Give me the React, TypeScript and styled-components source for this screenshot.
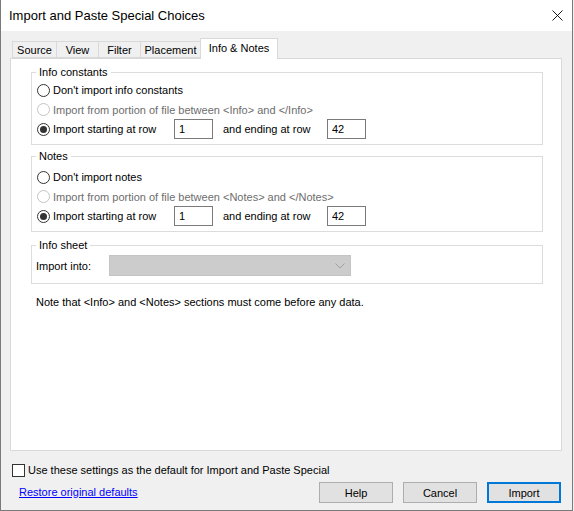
import styled, { createGlobalStyle } from 'styled-components';

const GlobalStyle = createGlobalStyle`
  html, body {
    margin: 0;
    background: #f0f0f0;
  }
  body {
    font-family: 'Liberation Sans', Arial, sans-serif;
    font-size: 11px;
    color: #000;
  }
`;

const Window = styled.div`
  width: 573px;
  height: 511px;
  box-sizing: border-box;
  border: 1px solid #7a7a7a;
  border-top: none;
  background: #f0f0f0;
  display: flex;
  flex-direction: column;
`;

const TitleBar = styled.div`
  height: 31px;
  flex: none;
  background: #fff;
  display: flex;
  align-items: center;
  justify-content: space-between;
  padding: 0 9px 0 8px;
  font-size: 13px;
`;

const Body = styled.div`
  padding: 7px 10px 0 9px;
`;

const TabStrip = styled.div`
  height: 20px;
  display: flex;
  align-items: flex-end;
  padding-left: 2px;
  position: relative;
  z-index: 1;
`;

const Tab = styled.div<{ $w: number; $active?: boolean }>`
  box-sizing: border-box;
  width: ${(p) => p.$w}px;
  height: ${(p) => (p.$active ? 21 : 17)}px;
  margin-left: -1px;
  margin-bottom: ${(p) => (p.$active ? -1 : 0)}px;
  padding-bottom: ${(p) => (p.$active ? 2 : 0)}px;
  border: 1px solid #d9d9d9;
  border-bottom: ${(p) => (p.$active ? 'none' : '1px solid #d9d9d9')};
  background: ${(p) => (p.$active ? '#fff' : '#f0f0f0')};
  display: flex;
  align-items: center;
  justify-content: center;
  &:first-child {
    margin-left: 0;
  }
`;

const Panel = styled.div`
  box-sizing: border-box;
  height: 393px;
  border: 1px solid #d9d9d9;
  background: #fff;
  padding: 5px 18px 0 20px;
`;

const Group = styled.fieldset<{ $mt: number; $pt: number; $pb: number }>`
  margin: ${(p) => p.$mt}px 0 0 0;
  padding: ${(p) => p.$pt}px 4px ${(p) => p.$pb}px 4px;
  border: 1px solid #dcdcdc;
  min-width: 0;
`;

const Legend = styled.legend`
  padding: 0 3px;
  line-height: 16px;
`;

const Row = styled.div<{ $h: number }>`
  height: ${(p) => p.$h}px;
  display: flex;
  align-items: center;
`;

const Option = styled.label<{ $w?: number; $disabled?: boolean }>`
  display: flex;
  align-items: center;
  gap: 3px;
  margin-left: 1px;
  width: ${(p) => (p.$w ? `${p.$w}px` : 'auto')};
  color: ${(p) => (p.$disabled ? '#6d6d6d' : '#000')};
`;

const RadioDot = styled.span<{ $checked?: boolean; $disabled?: boolean }>`
  box-sizing: border-box;
  width: 13px;
  height: 13px;
  border-radius: 50%;
  border: 1px solid ${(p) => (p.$disabled ? '#c4c4c4' : '#333')};
  background: #fff;
  display: flex;
  align-items: center;
  justify-content: center;
  &::after {
    content: '';
    display: ${(p) => (p.$checked ? 'block' : 'none')};
    width: 7px;
    height: 7px;
    border-radius: 50%;
    background: #333;
  }
`;

const NumBox = styled.div<{ $w: number }>`
  box-sizing: border-box;
  width: ${(p) => p.$w}px;
  height: 20px;
  border: 1px solid #7a7a7a;
  background: #fff;
  padding-left: 4px;
  display: flex;
  align-items: center;
`;

const Caption = styled.span<{ $w: number; $ml: number }>`
  width: ${(p) => p.$w}px;
  margin-left: ${(p) => p.$ml}px;
`;

const SelectLabel = styled.span`
  width: 73px;
`;

const Select = styled.div`
  box-sizing: border-box;
  width: 242px;
  height: 21px;
  background: #cccccc;
  border: 1px solid #c4c4c4;
  display: flex;
  align-items: center;
  justify-content: flex-end;
  padding-right: 5px;
`;

const NoteText = styled.div`
  margin: 10px 0 0 5px;
  line-height: 16px;
`;

const Footer = styled.div`
  padding: 11px 11px 0 11px;
`;

const CheckRow = styled.label`
  height: 16px;
  display: flex;
  align-items: center;
  gap: 3px;
`;

const CheckBox = styled.span`
  box-sizing: border-box;
  width: 13px;
  height: 13px;
  border: 1px solid #333;
  background: #fff;
`;

const ActionRow = styled.div`
  margin-top: 4px;
  height: 21px;
  display: flex;
  align-items: center;
`;

const Link = styled.a`
  color: #0000ff;
  text-decoration: underline;
  margin-left: 7px;
  margin-top: -2px;
  margin-right: auto;
  cursor: pointer;
`;

const Button = styled.button<{ $primary?: boolean }>`
  box-sizing: border-box;
  width: 74px;
  height: 21px;
  margin-left: 10px;
  padding: 0;
  font: inherit;
  color: #000;
  background: #e1e1e1;
  border: ${(p) => (p.$primary ? '2px solid #0078d7' : '1px solid #adadad')};
`;

function Radio({
  label,
  checked,
  disabled,
  width,
}: {
  label: string;
  checked?: boolean;
  disabled?: boolean;
  width?: number;
}) {
  return (
    <Option $w={width} $disabled={disabled}>
      <RadioDot $checked={checked} $disabled={disabled} />
      <span>{label}</span>
    </Option>
  );
}

function RangeRow({ from, to }: { from: string; to: string }) {
  return (
    <Row $h={20}>
      <Radio label="Import starting at row" checked width={137} />
      <NumBox $w={39}>{from}</NumBox>
      <Caption $w={104} $ml={10}>
        and ending at row
      </Caption>
      <NumBox $w={39}>{to}</NumBox>
    </Row>
  );
}

const tabs = [
  { label: 'Source', w: 45 },
  { label: 'View', w: 43 },
  { label: 'Filter', w: 43 },
  { label: 'Placement', w: 61 },
  { label: 'Info & Notes', w: 78, active: true },
];

export default function App() {
  return (
    <>
      <GlobalStyle />
      <Window>
        <TitleBar>
          <span>Import and Paste Special Choices</span>
          <svg width="11" height="11" viewBox="0 0 11 11">
            <path d="M0.5 0.5L10.5 10.5M10.5 0.5L0.5 10.5" stroke="#000" strokeWidth="0.9" />
          </svg>
        </TitleBar>
        <Body>
          <TabStrip>
            {tabs.map((t) => (
              <Tab key={t.label} $w={t.w} $active={t.active}>
                {t.label}
              </Tab>
            ))}
          </TabStrip>
          <Panel>
            <Group $mt={0} $pt={0} $pb={5}>
              <Legend>Info constants</Legend>
              <Row $h={20}>
                <Radio label="Don't import info constants" />
              </Row>
              <Row $h={19}>
                <Radio
                  label="Import from portion of file between <Info> and </Info>"
                  disabled
                />
              </Row>
              <RangeRow from="1" to="42" />
            </Group>
            <Group $mt={3} $pt={3} $pb={5}>
              <Legend>Notes</Legend>
              <Row $h={20}>
                <Radio label="Don't import notes" />
              </Row>
              <Row $h={19}>
                <Radio
                  label="Import from portion of file between <Notes> and </Notes>"
                  disabled
                />
              </Row>
              <RangeRow from="1" to="42" />
            </Group>
            <Group $mt={5} $pt={2} $pb={7}>
              <Legend>Info sheet</Legend>
              <Row $h={21}>
                <SelectLabel>Import into:</SelectLabel>
                <Select>
                  <svg width="10" height="6" viewBox="0 0 10 6">
                    <path d="M0.5 0.5L5 5L9.5 0.5" fill="none" stroke="#a0a0a0" strokeWidth="1" />
                  </svg>
                </Select>
              </Row>
            </Group>
            <NoteText>
              Note that &lt;Info&gt; and &lt;Notes&gt; sections must come before any data.
            </NoteText>
          </Panel>
        </Body>
        <Footer>
          <CheckRow>
            <CheckBox />
            <span>Use these settings as the default for Import and Paste Special</span>
          </CheckRow>
          <ActionRow>
            <Link>Restore original defaults</Link>
            <Button>Help</Button>
            <Button>Cancel</Button>
            <Button $primary>Import</Button>
          </ActionRow>
        </Footer>
      </Window>
    </>
  );
}
